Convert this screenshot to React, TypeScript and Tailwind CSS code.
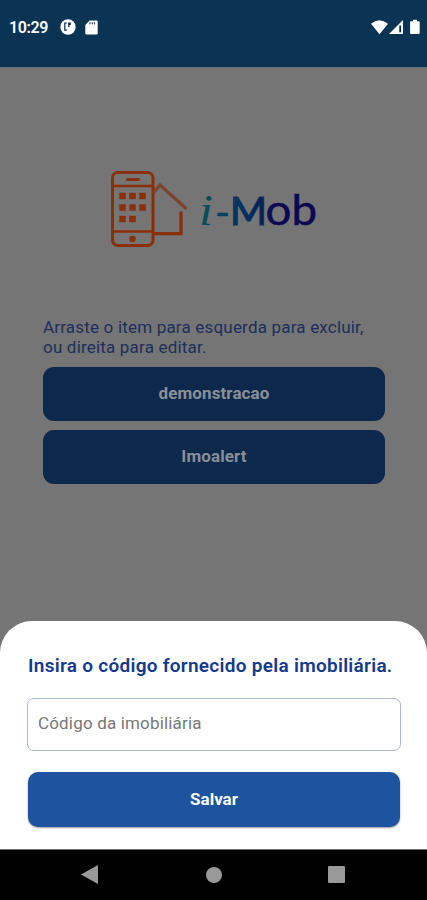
import { useState } from 'react'

const agencies = ['demonstracao', 'Imoalert']

function StatusBar() {
  return (
    <header className="flex h-[67px] shrink-0 items-start justify-between bg-[#0b3353] pt-[19px] pr-[7px] pl-[9px] text-white">
      <div className="flex h-4 items-center">
        <span className="w-[39px] pt-[2px] text-[16px] leading-4 font-semibold tracking-[-0.4px]">10:29</span>
        <svg className="ml-3 size-4" viewBox="0 0 16 16">
          <circle cx="8" cy="8" r="7.7" fill="white" />
          <path d="M4.200 3.400h2.600v1.200H5.400v6h1.400v1.200H4.200z" fill="#0b2350" />
          <path d="M8.200 3.500h2.600v2.500H9.500v2H8.200z" fill="#0b2350" />
        </svg>
        <svg className="ml-[9px] h-[15px] w-[13px]" viewBox="0 0 13 15">
          <path d="M4.600.5h6.900q1.200 0 1.200 1.200v11.600q0 1.200-1.200 1.200h-10Q.3 14.500.3 13.300V5z" fill="white" />
          <path d="M5 2.300v2M7.300 2.300v2M9.600 2.300v2" stroke="#0b2350" strokeWidth="1" />
        </svg>
      </div>

      <svg className="h-4 w-[50px]" viewBox="0 0 50 16">
        <path d="M1 4.800Q9.500-2.500 18 4.800L9.500 15.200z" fill="white" />
        <path d="M33 1v14H19z" fill="white" />
        <path d="M29.300 6.500h1.800v6.800h-1.800z" fill="#0b2350" />
        <path d="M41 2.200h2V.8h4v1.400h1.800q.9 0 .9.900v11q0 .9-.9.900h-7.800q-.9 0-.9-.9v-11q0-.9.900-.9z" fill="white" />
      </svg>
    </header>
  )
}

function Logo() {
  return (
    <svg className="mt-[92px] ml-[100px] h-[100px] w-[227px] shrink-0" viewBox="0 0 227 100">
      <defs>
        <linearGradient id="brand" gradientUnits="userSpaceOnUse" x1="100" y1="0" x2="190" y2="0">
          <stop offset="0" stopColor="#07525c" />
          <stop offset="0.45" stopColor="#06365f" />
          <stop offset="0.85" stopColor="#0b0853" />
        </linearGradient>
      </defs>
      {/* Phone */}
      <g fill="none" stroke="#8a2f0c" strokeWidth="3">
        <rect x="12.500" y="12.500" width="40.500" height="73" rx="5.500" />
        <path d="M13 26h40M13 71.500h40" strokeWidth="2.500" />
        <path d="M27.500 19.500h11" strokeLinecap="round" />
        <circle cx="32.500" cy="79" r="1.800" strokeWidth="2.800" />
      </g>
      <path
        d="M19.500 33h6v6h-6zM29.500 33h6v6h-6zM39.500 33h6v6h-6zM19.500 44.500h6v6h-6zM29.500 44.500h6v6h-6zM39.500 44.500h6v6h-6zM19.500 56h6v6h-6zM29.500 56h6v6h-6z"
        fill="#8a2f0c"
        stroke="#8a2f0c"
        strokeWidth="0.500"
      />
      {/* House */}
      <path d="M54 32l6-7L85.500 48" fill="none" stroke="#7e422e" strokeWidth="3.300" strokeLinecap="round" />
      <path d="M54 73.700h27V53" fill="none" stroke="#8a2f0c" strokeWidth="3.300" strokeLinecap="round" />
      {/* Wordmark */}
      <g fill="url(#brand)">
        <text x="99" y="65" fontSize="45" className="font-['Liberation_Serif',serif] italic" textLength="14" lengthAdjust="spacingAndGlyphs">i</text>
        <text x="115" y="67" fontSize="40" className="font-[Lato,sans-serif]" stroke="#06425e" strokeWidth="0.500" textLength="15" lengthAdjust="spacingAndGlyphs">-</text>
        <text x="130" y="64.500" fontSize="39" className="font-[Lato,sans-serif]" stroke="#06305f" strokeWidth="1.200" textLength="37" lengthAdjust="spacingAndGlyphs">M</text>
        <text x="165.500" y="64.500" fontSize="42" className="font-[Lato,sans-serif]" stroke="#0b0853" strokeWidth="0.500" textLength="51.500" lengthAdjust="spacingAndGlyphs">ob</text>
      </g>
    </svg>
  )
}

function NavigationBar() {
  return (
    <nav className="flex h-[51px] shrink-0 items-center justify-between border-t border-[#707070] bg-black pr-[82px] pb-px pl-[81px]">
      <button aria-label="Voltar">
        <svg className="h-[19px] w-[17px]" viewBox="0 0 17 19">
          <path d="M17 0v19L0 9.500z" fill="#999999" />
        </svg>
      </button>
      <button aria-label="Início" className="ml-[2px] size-4 rounded-full bg-[#999999]" />
      <button aria-label="Recentes" className="size-[17px] rounded-[1px] bg-[#999999]" />
    </nav>
  )
}

export default function App() {
  const [code, setCode] = useState('')

  return (
    <div className="flex h-[900px] w-[427px] flex-col overflow-hidden bg-[#757575] font-[Roboto,sans-serif]">
      <StatusBar />

      <main className="flex h-[554px] shrink-0 flex-col border-t border-[#667079]">
        <Logo />
        <p className="mt-[57px] ml-[43px] text-[17px] leading-5 tracking-[0.19px] whitespace-nowrap text-[#1c2f5c]">
          Arraste o item para esquerda para excluir,
          <br />
          ou direita para editar.
        </p>
        <div className="mx-[43px] mt-[9.5px] flex flex-col gap-[9px]">
          {agencies.map((name) => (
            <button key={name} className="h-[54px] w-[342px] rounded-[11px] bg-[#0c284c] pt-px text-[17px] font-bold tracking-[0.1px] text-[#8b8f96]">
              {name}
            </button>
          ))}
        </div>
      </main>

      {/* Bottom sheet */}
      <section className="flex h-[228px] shrink-0 flex-col rounded-t-[32px] bg-white px-[27px] pt-[33px]">
        <h2 className="pl-px text-[19px] leading-6 font-semibold tracking-[0.28px] whitespace-nowrap text-[#133a8c]">
          Insira o código fornecido pela imobiliária.
        </h2>
        <input
          value={code}
          onChange={(e) => setCode(e.target.value)}
          placeholder="Código da imobiliária"
          className="mt-5 h-[53px] w-[374px] rounded-[7px] border border-[#a9b9d6] px-[10px] pb-[3px] text-[17px] tracking-[0.17px] outline-none placeholder:text-[#777777]"
        />
        <button className="mt-[21px] ml-px h-[55px] w-[372px] rounded-[10px] bg-[#1e549f] text-[17px] font-bold text-white shadow-[0_1px_2px_rgba(0,0,0,0.4)]">
          Salvar
        </button>
      </section>

      <NavigationBar />
    </div>
  )
}
